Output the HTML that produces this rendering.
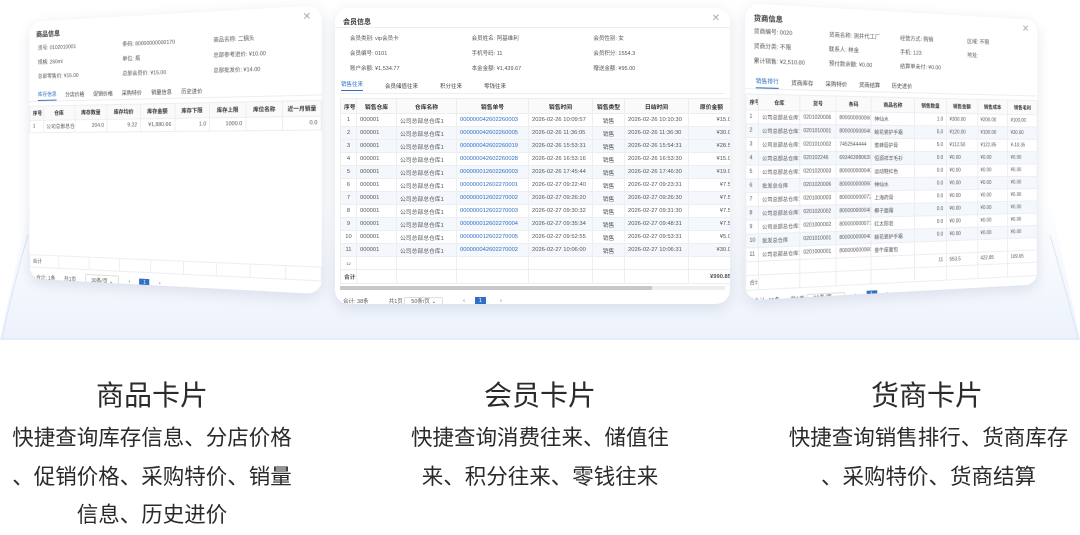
<!DOCTYPE html>
<html><head><meta charset="utf-8">
<style>
*{margin:0;padding:0;box-sizing:border-box}
body{width:1080px;height:527px;background:#fff;position:relative;overflow:hidden;font-family:"Liberation Sans","Noto Sans CJK SC",sans-serif;color:#333}
.floor{position:absolute;left:0;top:0}
.card{position:absolute;background:#fff;border-radius:14px;box-shadow:0 4px 14px rgba(90,110,150,.18);overflow:hidden;font-size:5.5px;color:#555}
.ttl{font-size:7px;color:#333;font-weight:bold;padding:9px 8px 0;height:20px;border-bottom:1px solid #eee}
.x{position:absolute;right:10px;top:5px;font-size:10px;color:#aaa}
table{border-collapse:collapse;width:100%;table-layout:fixed}
td,th{border:1px solid #eceef2;height:13px;padding:0 3px;white-space:nowrap;overflow:hidden;font-weight:normal}
th{font-weight:bold;color:#333;height:15px;text-align:center;background:#fafafa}
tr.s td{background:#f4f7fc}
.b{color:#2f6fc4}
.tabs{display:flex;gap:16px;padding:0 10px;border-bottom:1px solid #eee;height:13px;align-items:center;color:#444}
.tabs .on{color:#2f6fc4;border-bottom:1px solid #2f6fc4;padding-bottom:2px}
.foot{display:flex;align-items:center;gap:10px;padding:0 8px;height:20px;color:#555}
.sel{border:1px solid #ddd;padding:1px 6px;border-radius:2px}
.pg{background:#2f6fc4;color:#fff;padding:1px 4px}
.info{display:grid;padding:7px 30px 0;row-gap:7px;color:#555}
.t{position:absolute;text-align:center;color:#2a2a2a}
.h{font-size:28px;top:374px;width:300px;font-weight:normal}
.d{font-size:21.5px;line-height:38.5px;top:419px;width:320px}
</style></head><body>
<svg class="floor" width="1080" height="345">
<defs><linearGradient id="g" x1="0" y1="0" x2="0" y2="1"><stop offset="0" stop-color="#fff"/><stop offset="1" stop-color="#edf2fb"/></linearGradient></defs>
<path d="M30 200 L1050 200 L1080 339 L0 339 Z" fill="url(#g)"/>
<path d="M0 339 L1080 339" stroke="#e5edf8" stroke-width="2"/>
<path d="M28 235 Q12 290 2 339" stroke="#dbe6f5" fill="none"/>
<path d="M1050 235 Q1066 290 1078 339" stroke="#dbe6f5" fill="none"/>
</svg>

<!-- left card -->
<div style="position:absolute;left:12px;top:12px;width:310px;height:285px;perspective:900px">
<div class="card" style="width:310px;height:272px;top:2px;transform:rotateY(-20deg);">
<div class="ttl" style="border:none">商品信息</div><span class="x">✕</span>
<div class="info" style="grid-template-columns:1fr 1fr 1fr;padding:4px 10px">
<span>货号: 0102010001</span><span>条码: 80000000000170</span><span>商品名称: 二锅头</span>
<span>规格: 260ml</span><span>单位: 瓶</span><span>总部参考进价: ¥10.00</span>
<span>总部零售价: ¥15.00</span><span>总部会员价: ¥15.00</span><span>总部批发价: ¥14.00</span></div>
<div class="tabs" style="margin-top:6px;gap:10px"><span class="on">库存信息</span><span>分店价格</span><span>促销价格</span><span>采购特价</span><span>销量信息</span><span>历史进价</span></div>
<table style="margin-top:4px"><tr><th style="width:16px">序号</th><th>仓库</th><th>库存数量</th><th>库存均价</th><th>库存金额</th><th>库存下限</th><th>库存上限</th><th>库位名称</th><th>近一月销量</th></tr>
<tr><td>1</td><td>公司总部总仓库1</td><td style="text-align:right">204.0</td><td style="text-align:right">9.22</td><td style="text-align:right">¥1,880.66</td><td style="text-align:right">1.0</td><td style="text-align:right">1000.0</td><td></td><td style="text-align:right">0.0</td></tr></table>
<div style="height:128px"></div>
<table><tr><td>合计</td><td></td><td></td><td></td><td></td><td></td><td></td><td></td><td></td></tr></table>
<div class="foot"><span>合计: 1条</span><span>共1页</span><span class="sel">30条/页 ⌄</span><span>‹</span><span class="pg">1</span><span>›</span></div>
</div></div>

<!-- center card -->
<div class="card" style="left:335px;top:8px;width:395px;height:296px;border-radius:14px">
<div class="ttl">会员信息</div><span class="x">✕</span>
<div class="info" style="grid-template-columns:1fr 1fr 1fr;padding:6px 15px;row-gap:7px">
<span>会员类别: vip会员卡</span><span>会员姓名: 阿基维利</span><span>会员性别: 女</span>
<span>会员编号: 0101</span><span>手机号码: 11</span><span>会员积分: 1554.3</span>
<span>账户余额: ¥1,534.77</span><span>本金金额: ¥1,439.67</span><span>赠送金额: ¥95.00</span></div>
<div class="tabs" style="margin:0 5px;height:16px;gap:22px;padding:0 1px"><span class="on">销售往来</span><span>会员储值往来</span><span>积分往来</span><span>零钱往来</span></div>
<table style="margin:4px 0 0 5px;width:395px;font-size:5.8px">
<tr><th style="width:16px">序号</th><th style="width:40px">销售仓库</th><th style="width:60px">仓库名称</th><th style="width:72px">销售单号</th><th style="width:64px">销售时间</th><th style="width:32px">销售类型</th><th style="width:64px">日结时间</th><th>原价金额</th></tr>
<tr><td style="text-align:center">1</td><td>000001</td><td>公司总部总仓库1</td><td class="b">000000042602260003</td><td>2026-02-26 10:09:57</td><td style="text-align:center">销售</td><td>2026-02-26 10:10:30</td><td style="text-align:right">¥15.0</td></tr>
<tr class="s"><td style="text-align:center">2</td><td>000001</td><td>公司总部总仓库1</td><td class="b">000000042602260005</td><td>2026-02-26 11:36:05</td><td style="text-align:center">销售</td><td>2026-02-26 11:36:30</td><td style="text-align:right">¥30.0</td></tr>
<tr class="s"><td style="text-align:center">3</td><td>000001</td><td>公司总部总仓库1</td><td class="b">000000042602260019</td><td>2026-02-26 15:53:31</td><td style="text-align:center">销售</td><td>2026-02-26 15:54:31</td><td style="text-align:right">¥28.5</td></tr>
<tr><td style="text-align:center">4</td><td>000001</td><td>公司总部总仓库1</td><td class="b">000000042602260028</td><td>2026-02-26 16:53:16</td><td style="text-align:center">销售</td><td>2026-02-26 16:53:30</td><td style="text-align:right">¥15.0</td></tr>
<tr class="s"><td style="text-align:center">5</td><td>000001</td><td>公司总部总仓库1</td><td class="b">000000012602260003</td><td>2026-02-26 17:45:44</td><td style="text-align:center">销售</td><td>2026-02-26 17:46:30</td><td style="text-align:right">¥19.0</td></tr>
<tr><td style="text-align:center">6</td><td>000001</td><td>公司总部总仓库1</td><td class="b">000000012602270001</td><td>2026-02-27 09:22:40</td><td style="text-align:center">销售</td><td>2026-02-27 09:23:31</td><td style="text-align:right">¥7.5</td></tr>
<tr class="s"><td style="text-align:center">7</td><td>000001</td><td>公司总部总仓库1</td><td class="b">000000012602270002</td><td>2026-02-27 09:26:20</td><td style="text-align:center">销售</td><td>2026-02-27 09:26:30</td><td style="text-align:right">¥7.5</td></tr>
<tr><td style="text-align:center">8</td><td>000001</td><td>公司总部总仓库1</td><td class="b">000000012602270003</td><td>2026-02-27 09:30:32</td><td style="text-align:center">销售</td><td>2026-02-27 09:31:30</td><td style="text-align:right">¥7.5</td></tr>
<tr class="s"><td style="text-align:center">9</td><td>000001</td><td>公司总部总仓库1</td><td class="b">000000012602270004</td><td>2026-02-27 09:35:34</td><td style="text-align:center">销售</td><td>2026-02-27 09:48:31</td><td style="text-align:right">¥7.5</td></tr>
<tr><td style="text-align:center">10</td><td>000001</td><td>公司总部总仓库1</td><td class="b">000000012602270005</td><td>2026-02-27 09:52:55</td><td style="text-align:center">销售</td><td>2026-02-27 09:53:31</td><td style="text-align:right">¥5.0</td></tr>
<tr class="s"><td style="text-align:center">11</td><td>000001</td><td>公司总部总仓库1</td><td class="b">000000042602270002</td><td>2026-02-27 10:06:00</td><td style="text-align:center">销售</td><td>2026-02-27 10:06:31</td><td style="text-align:right">¥30.0</td></tr>
<tr><td style="text-align:center;height:6px;font-size:4px">12</td><td></td><td></td><td></td><td></td><td></td><td></td><td></td></tr>
<tr><td style="height:14px;font-weight:bold">合计</td><td></td><td></td><td></td><td></td><td></td><td></td><td style="text-align:right;font-weight:bold">¥990.85</td></tr>
</table>
<div style="margin:2px 5px 0;height:4px;background:#eee"><div style="width:312px;height:4px;background:#c8c8c8"></div></div>
<div class="foot" style="height:22px;gap:20px"><span>合计: 38条</span><span>共1页 <span class="sel">50条/页 ⌄</span></span><span>‹</span><span class="pg" style="margin-left:-10px">1</span><span style="margin-left:-6px">›</span></div>
</div>

<!-- right card -->
<div style="position:absolute;left:745px;top:10px;width:310px;height:290px;perspective:900px">
<div class="card" style="width:310px;height:280px;top:2px;transform:rotateY(20deg);">
<div class="ttl" style="border:none">货商信息</div><span class="x">✕</span>
<div class="info" style="grid-template-columns:1fr 1fr 1fr 1fr;padding:2px 8px;row-gap:6px">
<span>货商编号: 0020</span><span>货商名称: 测井代工厂</span><span>经营方式: 购销</span><span>区域: 不限</span>
<span>货商分类: 不限</span><span>联系人: 林金</span><span>手机: 123</span><span>地址:</span>
<span>累计销售: ¥2,510.80</span><span>预付款余额: ¥0.00</span><span>结算单未付: ¥0.00</span><span></span></div>
<div class="tabs" style="margin-top:8px;gap:12px"><span class="on">销售排行</span><span>货商库存</span><span>采购特价</span><span>货商结算</span><span>历史进价</span></div>
<table style="margin-top:4px;font-size:5px">
<tr><th style="width:12px">序号</th><th style="width:40px">仓库</th><th style="width:36px">货号</th><th style="width:36px">条码</th><th style="width:46px">商品名称</th><th>销售数量</th><th>销售金额</th><th>销售成本</th><th>销售毛利</th></tr>
<tr><td>1</td><td>公司总部总仓库1</td><td>0201020006</td><td>8000000000605</td><td>伸仙水</td><td style="text-align:right">1.0</td><td>¥300.00</td><td>¥200.00</td><td>¥100.00</td></tr>
<tr class="s"><td>2</td><td>公司总部总仓库1</td><td>0201010001</td><td>8000000000403</td><td>鍮花瓷护手霜</td><td style="text-align:right">5.0</td><td>¥120.00</td><td>¥100.00</td><td>¥20.00</td></tr>
<tr><td>3</td><td>公司总部总仓库1</td><td>0201010002</td><td>7452544444</td><td>蜜蜂唇护膏</td><td style="text-align:right">5.0</td><td>¥112.50</td><td>¥122.85</td><td>¥-10.35</td></tr>
<tr class="s"><td>4</td><td>公司总部总仓库1</td><td>020102246</td><td>6934639806391</td><td>恒源祥羊毛衫</td><td style="text-align:right">0.0</td><td>¥0.00</td><td>¥0.00</td><td>¥0.00</td></tr>
<tr><td>5</td><td>公司总部总仓库1</td><td>0201020003</td><td>8000000000401</td><td>运动鞋红色</td><td style="text-align:right">0.0</td><td>¥0.00</td><td>¥0.00</td><td>¥0.00</td></tr>
<tr class="s"><td>6</td><td>批发总仓库</td><td>0201020006</td><td>8000000000605</td><td>伸仙水</td><td style="text-align:right">0.0</td><td>¥0.00</td><td>¥0.00</td><td>¥0.00</td></tr>
<tr><td>7</td><td>公司总部总仓库1</td><td>0201000003</td><td>8000000000720</td><td>上海药膏</td><td style="text-align:right">0.0</td><td>¥0.00</td><td>¥0.00</td><td>¥0.00</td></tr>
<tr class="s"><td>8</td><td>公司总部总仓库1</td><td>0201020002</td><td>8000000000404</td><td>椰子面霜</td><td style="text-align:right">0.0</td><td>¥0.00</td><td>¥0.00</td><td>¥0.00</td></tr>
<tr><td>9</td><td>公司总部总仓库1</td><td>0201000002</td><td>8000000000712</td><td>红太阳皂</td><td style="text-align:right">0.0</td><td>¥0.00</td><td>¥0.00</td><td>¥0.00</td></tr>
<tr class="s"><td>10</td><td>批发总仓库</td><td>0201010001</td><td>8000000000403</td><td>鍮花瓷护手霜</td><td style="text-align:right">0.0</td><td>¥0.00</td><td>¥0.00</td><td>¥0.00</td></tr>
<tr><td>11</td><td>公司总部总仓库1</td><td>0201000001</td><td>8000000000668</td><td>金牛座面包</td><td></td><td></td><td></td><td></td></tr>
<tr><td></td><td></td><td></td><td></td><td></td><td style="text-align:right">11</td><td>553.5</td><td>422.85</td><td>109.65</td></tr>
<tr><td style="height:14px">合计</td><td></td><td></td><td></td><td></td><td></td><td></td><td></td><td></td></tr>
</table>
<div class="foot"><span>合计: 11条</span><span>共1页 <span class="sel">30条/页 ⌄</span></span><span>‹</span><span class="pg">1</span><span>›</span></div>
</div></div>

<div class="t h" style="left:2px">商品卡片</div>
<div class="t h" style="left:390px">会员卡片</div>
<div class="t h" style="left:777px">货商卡片</div>
<div class="t d" style="left:-8px">快捷查询库存信息、分店价格<br>、促销价格、采购特价、销量<br>信息、历史进价</div>
<div class="t d" style="left:380px">快捷查询消费往来、储值往<br>来、积分往来、零钱往来</div>
<div class="t d" style="left:766px;width:325px">快捷查询销售排行、货商库存<br>、采购特价、货商结算</div>
</body></html>
